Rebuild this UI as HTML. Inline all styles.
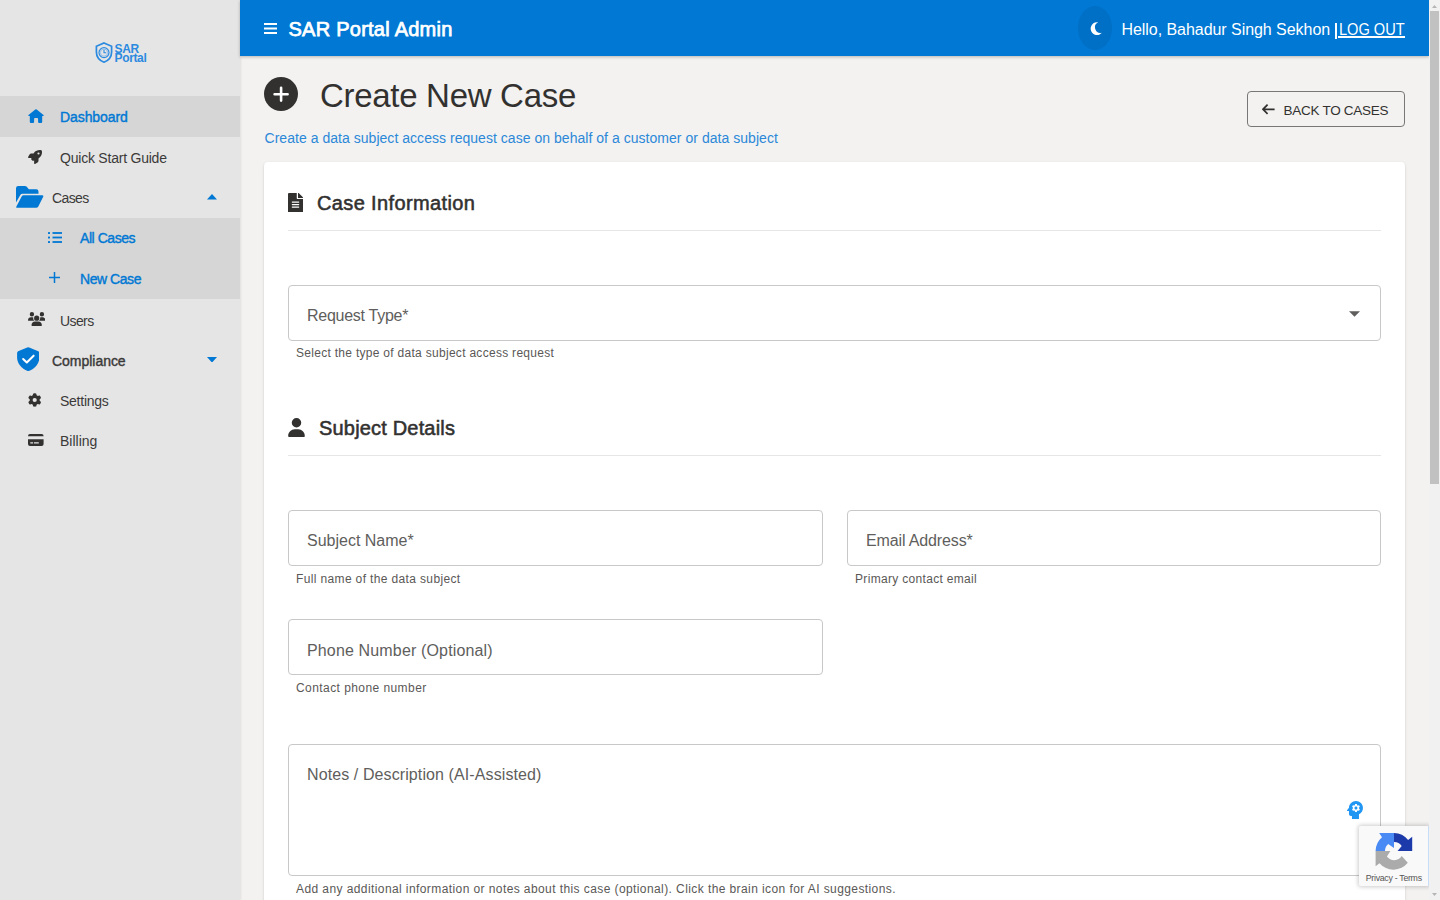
<!DOCTYPE html>
<html><head><meta charset="utf-8">
<style>
*{box-sizing:border-box}
html,body{margin:0;padding:0;width:1440px;height:900px;overflow:hidden;background:#f3f2f1;font-family:"Liberation Sans",sans-serif;color:#323130}
.abs{position:absolute}
#side{position:absolute;left:0;top:0;width:240px;height:900px;background:#e5e5e5;box-shadow:1px 0 2px rgba(0,0,0,0.08)}
.item{position:absolute;left:0;width:240px;height:40.5px}
.item .t{position:absolute;top:0;line-height:40.5px;font-size:14px;white-space:nowrap;color:#3b3a39}
.sel{background:#d6d6d6}
.sb{-webkit-text-stroke:0.4px currentColor}
.blue,.item .blue{color:#0078d4}
#hdr{position:absolute;left:240px;top:0;width:1189px;height:56px;background:#0078d4;box-shadow:0 1px 3px rgba(0,0,0,0.25)}
#card{position:absolute;left:264px;top:162px;width:1141px;height:760px;background:#fff;border-radius:4px;box-shadow:0 2px 1px -1px rgba(0,0,0,.2),0 1px 1px 0 rgba(0,0,0,.14),0 1px 3px 0 rgba(0,0,0,.12)}
.fld{position:absolute;border:1px solid #c8c8c8;border-radius:4px;background:#fff}
.lbl{position:absolute;left:18px;font-size:16px;color:#605e5c;white-space:nowrap}
.help{position:absolute;font-size:12px;letter-spacing:0.4px;color:#5a5856;white-space:nowrap}
.h2{position:absolute;font-size:19px;font-weight:700;color:#323130;white-space:nowrap}
.div{position:absolute;left:288px;width:1093px;height:1px;background:#e6e6e6}
#sb{position:absolute;left:1429px;top:0;width:11px;height:900px;background:#f1f1f1}
</style></head><body>

<div id="side">
  <!-- logo -->
  <svg class="abs" style="left:94.5px;top:41.5px" width="18" height="21" viewBox="0 0 18 21">
    <path d="M9 1 L16.6 4.2 V10 C16.6 15 13.2 18.6 9 20.2 C4.8 18.6 1.4 15 1.4 10 V4.2 Z" fill="none" stroke="#2b8ae0" stroke-width="1.7"/>
    <circle cx="9" cy="10.6" r="5" fill="none" stroke="#2b8ae0" stroke-width="1.2"/>
    <circle cx="9" cy="10.6" r="3.6" fill="none" stroke="#7db5ea" stroke-width="0.8"/>
    <path d="M9 7.8 V10.8 H11.2" fill="none" stroke="#2b8ae0" stroke-width="1.1"/>
  </svg>
  <div class="abs" style="left:114.5px;top:44.7px;font-size:12px;font-weight:700;color:#2b8ae0;line-height:9.6px;letter-spacing:-0.35px">SAR<br>Portal</div>

  <div class="item sel" style="top:96px">
    <svg class="abs" style="left:28px;top:12.8px" width="16" height="14.2" viewBox="0 0 16 14.2"><path d="M7.3 0.4 Q8 -0.1 8.7 0.4 L15.5 5.9 Q16.2 6.9 15.2 6.9 H14.2 V12.8 Q14.2 14.1 12.9 14.1 H11.4 Q10.1 14.1 10.1 12.8 V9.9 Q10.1 9.1 9.3 9.1 H6.9 Q6.1 9.1 6.1 9.9 V12.8 Q6.1 14.1 4.8 14.1 H3.1 Q1.8 14.1 1.8 12.8 V6.9 H0.8 Q-0.2 6.9 0.5 5.9 Z" fill="#0078d4"/></svg>
    <div class="t blue sb" style="left:60px;top:1px;letter-spacing:-0.08px">Dashboard</div>
  </div>
  <div class="item" style="top:136.5px">
    <svg class="abs" style="left:28px;top:13.3px" width="14" height="14" viewBox="0 0 512 512"><path d="M156.6 384.9L125.7 354c-8.5-8.5-11.5-20.8-7.7-32.2c3-8.9 7-20.5 11.8-33.8L24 288c-8.6 0-16.6-4.6-20.9-12.1s-4.2-16.7 .2-24.1l52.5-88.5c13-21.9 36.5-35.3 61.9-35.3l82.3 0c2.4-4 4.8-7.7 7.2-11.3C289.1-4.1 411.1-8.1 483.9 5.3c11.6 2.1 20.6 11.2 22.8 22.8c13.4 72.9 9.3 194.8-111.4 276.7c-3.5 2.4-7.3 4.8-11.3 7.2v82.3c0 25.4-13.4 49-35.3 61.9l-88.5 52.5c-7.4 4.4-16.6 4.5-24.1 .2s-12.1-12.2-12.1-20.9V380.8c-14.1 4.9-26.4 8.9-35.7 11.9c-11.2 3.6-23.4 .5-31.8-7.8zM384 168a40 40 0 1 0 0-80 40 40 0 1 0 0 80z" fill="#323130"/></svg>
    <div class="t" style="left:60px;top:1px;letter-spacing:-0.22px">Quick Start Guide</div>
  </div>
  <div class="item" style="top:177px">
    <svg class="abs" style="left:15.8px;top:9px" width="28" height="22" viewBox="0 0 28 22"><g fill="#0078d4"><path d="M0 2.3 Q0 0 2.3 0 H8.8 Q10 0 10.8 0.8 L12.8 3.2 H20.2 Q22.5 3.2 22.5 5.5 V7.7 H6.5 Q5 7.7 4.3 9 L0 16.5 Z"/><path d="M7.5 9.2 H26 Q27.9 9.2 27.2 10.8 L22.3 20.5 Q21.6 21.8 20.2 21.8 H1.3 Q-0.3 21.8 0.4 20.5 L5.8 10.3 Q6.3 9.2 7.5 9.2Z"/></g></svg>
    <div class="t" style="left:52px;top:1px;letter-spacing:-0.6px">Cases</div>
    <svg class="abs" style="left:207px;top:17px" width="10" height="5.6" viewBox="0 0 10 5.6"><path d="M0 5.6 L5 0 L10 5.6Z" fill="#0078d4"/></svg>
  </div>
  <div class="abs sel" style="left:0;top:217.5px;width:240px;height:81px"></div>
  <div class="item" style="top:217.5px">
    <svg class="abs" style="left:48.2px;top:14.5px" width="14" height="11" viewBox="0 0 14 11"><g fill="#0078d4"><rect x="0" y="0" width="2" height="2" rx="0.5"/><rect x="0" y="4.5" width="2" height="2" rx="0.5"/><rect x="0" y="9" width="2" height="2" rx="0.5"/><rect x="4.5" y="0.1" width="9.5" height="1.8"/><rect x="4.5" y="4.6" width="9.5" height="1.8"/><rect x="4.5" y="9.1" width="9.5" height="1.8"/></g></svg>
    <div class="t blue sb" style="left:80px;top:0px;letter-spacing:-0.45px">All Cases</div>
  </div>
  <div class="item" style="top:258px">
    <svg class="abs" style="left:48.6px;top:14px" width="11" height="11" viewBox="0 0 11 11"><path d="M4.75 0h1.5v4.75H11v1.5H6.25V11h-1.5V6.25H0v-1.5h4.75z" fill="#0078d4"/></svg>
    <div class="t blue sb" style="left:80px;top:1px;letter-spacing:-0.45px">New Case</div>
  </div>
  <div class="item" style="top:298.5px">
    <svg class="abs" style="left:28px;top:13.3px" width="17.4" height="14" viewBox="0 0 640 512"><path d="M144 0a80 80 0 1 1 0 160A80 80 0 1 1 144 0zM512 0a80 80 0 1 1 0 160A80 80 0 1 1 512 0zM0 298.7C0 239.8 47.8 192 106.7 192h42.7c15.9 0 31 3.5 44.6 9.7c-1.3 7.2-1.900 14.7-1.9 22.3c0 38.2 16.8 72.5 43.3 96c-.2 0-.4 0-.7 0H21.3C9.6 320 0 310.4 0 298.7zM405.3 320c-.2 0-.4 0-.7 0c26.6-23.5 43.3-57.8 43.3-96c0-7.6-.7-15-1.9-22.3c13.6-6.3 28.7-9.7 44.6-9.7h42.7C592.2 192 640 239.8 640 298.7c0 11.8-9.6 21.3-21.3 21.3H405.3zM224 224a96 96 0 1 1 192 0 96 96 0 1 1 -192 0zM128 485.3C128 411.7 187.7 352 261.3 352H378.7C452.3 352 512 411.7 512 485.3c0 14.7-11.9 26.7-26.7 26.7H154.7c-14.7 0-26.7-11.9-26.7-26.7z" fill="#323130"/></svg>
    <div class="t" style="left:60px;top:2px;letter-spacing:-0.6px">Users</div>
  </div>
  <div class="item" style="top:339px">
    <svg class="abs" style="left:16.8px;top:7.7px" width="22.4" height="24.2" viewBox="0 0 22 24"><path d="M11 0.2 Q11.5 0.2 12 0.4 L21 4.3 Q22 4.8 22 5.9 V10.5 C22 16.5 17.5 21.8 11 24 C4.5 21.8 0 16.5 0 10.5 V5.9 Q0 4.8 1 4.3 L10 0.4 Q10.5 0.2 11 0.2Z" fill="#0078d4"/><path d="M6 11.9 L9.6 15.4 L16.4 8.6" fill="none" stroke="#fff" stroke-width="2" stroke-linecap="round" stroke-linejoin="round"/></svg>
    <div class="t sb" style="left:52px;top:2px;letter-spacing:-0.03px">Compliance</div>
    <svg class="abs" style="left:207px;top:17.7px" width="10" height="5.6" viewBox="0 0 10 5.6"><path d="M0 0 L5 5.6 L10 0Z" fill="#0078d4"/></svg>
  </div>
  <div class="item" style="top:379.5px">
    <svg class="abs" style="left:28.2px;top:13.3px" width="13.4" height="14" viewBox="0 0 512 512"><path d="M495.9 166.6c3.2 8.7 .5 18.4-6.4 24.6l-43.3 39.4c1.1 8.3 1.7 16.8 1.7 25.4s-.6 17.1-1.7 25.4l43.3 39.4c6.9 6.2 9.6 15.9 6.4 24.6c-4.4 11.9-9.7 23.3-15.8 34.3l-4.7 8.1c-6.6 11-14 21.4-22.1 31.2c-5.9 7.2-15.7 9.6-24.5 6.8l-55.7-17.7c-13.4 10.3-28.2 18.9-44 25.4l-12.5 57.1c-2 9.1-9 16.3-18.2 17.800c-13.8 2.3-28 3.5-42.5 3.5s-28.7-1.2-42.5-3.5c-9.2-1.5-16.2-8.7-18.2-17.8l-12.5-57.1c-15.8-6.5-30.6-15.1-44-25.4L83.1 425.9c-8.8 2.8-18.6 .3-24.5-6.8c-8.1-9.8-15.5-20.2-22.1-31.2l-4.7-8.1c-6.1-11-11.4-22.4-15.8-34.3c-3.2-8.7-.5-18.4 6.4-24.6l43.3-39.4C64.6 273.1 64 264.6 64 256s.6-17.1 1.7-25.4L22.4 191.2c-6.9-6.2-9.6-15.9-6.4-24.6c4.4-11.9 9.7-23.3 15.8-34.3l4.7-8.1c6.6-11 14-21.4 22.1-31.2c5.9-7.2 15.7-9.6 24.5-6.8l55.7 17.7c13.4-10.3 28.2-18.9 44-25.4l12.5-57.1c2-9.1 9-16.3 18.2-17.8C227.3 1.2 241.5 0 256 0s28.7 1.2 42.5 3.5c9.2 1.5 16.2 8.7 18.2 17.8l12.5 57.1c15.8 6.5 30.6 15.1 44 25.4l55.7-17.7c8.8-2.8 18.6-.3 24.5 6.8c8.1 9.8 15.5 20.2 22.1 31.2l4.7 8.1c6.1 11 11.4 22.4 15.8 34.3zM256 336a80 80 0 1 0 0-160 80 80 0 1 0 0 160z" fill="#323130"/></svg>
    <div class="t" style="left:60px;top:1px;letter-spacing:-0.25px">Settings</div>
  </div>
  <div class="item" style="top:420px">
    <svg class="abs" style="left:28px;top:13.7px" width="15.6" height="12" viewBox="0 0 15.6 12"><path fill-rule="evenodd" d="M2 0h11.6Q15.6 0 15.6 2V2.2H0V2Q0 0 2 0z M0 5.2h15.6V10Q15.6 12 13.6 12H2Q0 12 0 10z M2.3 8.2v1.4h2.7V8.2z M5.9 8.2v1.4h4.9V8.2z" fill="#323130"/></svg>
    <div class="t" style="left:60px;top:1px">Billing</div>
  </div>
</div>
<div id="hdr">
  <svg class="abs" style="left:23.5px;top:23px" width="13" height="11" viewBox="0 0 13 11"><g fill="#fff"><rect y="0" width="13" height="2"/><rect y="4.5" width="13" height="2"/><rect y="9" width="13" height="2"/></g></svg>
  <div class="abs" style="left:48.5px;top:1px;line-height:56px;font-size:20px;font-weight:400;-webkit-text-stroke:0.75px #fff;letter-spacing:0.25px;color:#fff;white-space:nowrap">SAR Portal Admin</div>
  <div class="abs" style="left:838px;top:6px;width:34px;height:44px;border-radius:50%;background:#0070c6"></div>
  <svg class="abs" style="left:849.5px;top:22px" width="12" height="13" viewBox="0 0 12 13"><path d="M8.2 0.3 A6.4 6.4 0 1 0 11.9 10.8 A5.6 5.6 0 0 1 8.2 0.3Z" fill="#fff"/></svg>
  <div class="abs" style="left:881.5px;top:1px;line-height:57px;font-size:16px;letter-spacing:-0.05px;color:#fff;white-space:nowrap">Hello, Bahadur Singh Sekhon</div>
  <div class="abs" style="left:1095px;top:23px;width:1.6px;height:15.6px;background:#fff"></div>
  <div class="abs" style="left:1099px;top:1px;line-height:57px;font-size:16px;color:#fff;white-space:nowrap;transform:scaleX(0.912);transform-origin:0 0">LOG OUT</div>
  <div class="abs" style="left:1098px;top:36.2px;width:67px;height:1.4px;background:#fff"></div>
</div>

<!-- page title -->
<svg class="abs" style="left:264px;top:77px" width="34" height="34" viewBox="0 0 34 34"><circle cx="17" cy="17" r="17" fill="#323130"/><path d="M10.6 17.2 H23.6 M17.1 10.8 V23.6" stroke="#fff" stroke-width="2.6" stroke-linecap="round" fill="none"/></svg>
<div class="abs" style="left:320px;top:75.5px;font-size:33px;letter-spacing:-0.3px;line-height:40px;color:#323130;white-space:nowrap">Create New Case</div>
<div class="abs" style="left:264.5px;top:128.5px;font-size:14px;letter-spacing:0.035px;line-height:18px;color:#2b88d8;white-space:nowrap">Create a data subject access request case on behalf of a customer or data subject</div>

<div class="abs" style="left:1246.5px;top:91px;width:158.5px;height:35.5px;border:1px solid #777;border-radius:4px"></div>
<svg class="abs" style="left:1262px;top:103.5px" width="13" height="11" viewBox="0 0 13 11"><path d="M5.6 0.7 L1 5.3 L5.6 9.9 M1.2 5.3 H12.6" fill="none" stroke="#323130" stroke-width="1.7"/></svg>
<div class="abs" style="left:1283.5px;top:102px;font-size:13.5px;letter-spacing:-0.27px;line-height:18px;color:#323130;white-space:nowrap">BACK TO CASES</div>

<div id="card"></div>

<!-- Case Information -->
<svg class="abs" style="left:288px;top:192.5px" width="15" height="19.6" viewBox="0 0 384 512" preserveAspectRatio="none"><path d="M224 136V0H24C10.7 0 0 10.7 0 24v464c0 13.3 10.7 24 24 24h336c13.3 0 24-10.7 24-24V160H248c-13.2 0-24-10.8-24-24zm64 236c0 6.6-5.4 12-12 12H108c-6.6 0-12-5.4-12-12v-8c0-6.6 5.4-12 12-12h168c6.6 0 12 5.4 12 12v8zm0-64c0 6.6-5.4 12-12 12H108c-6.6 0-12-5.4-12-12v-8c0-6.6 5.4-12 12-12h168c6.6 0 12 5.4 12 12v8zm0-72v8c0 6.6-5.4 12-12 12H108c-6.6 0-12-5.4-12-12v-8c0-6.6 5.4-12 12-12h168c6.6 0 12 5.4 12 12zm96-114.1v6.1H256V0h6.1c6.4 0 12.5 2.5 17 7l97.9 98c4.5 4.5 7 10.6 7 16.9z" fill="#323130"/></svg>
<div class="h2" style="left:317px;top:191px;line-height:24px;font-size:20px;font-weight:400;-webkit-text-stroke:0.55px #323130;letter-spacing:0.37px">Case Information</div>
<div class="div" style="top:230px"></div>

<div class="fld" style="left:288px;top:285px;width:1093px;height:56px"></div>
<div class="lbl" style="left:307px;top:306px;line-height:20px;letter-spacing:-0.27px">Request Type*</div>
<svg class="abs" style="left:1349px;top:311px" width="11" height="6" viewBox="0 0 10 5"><path d="M0 0 L5 5 L10 0Z" fill="#605e5c"/></svg>
<div class="help" style="left:296px;top:345px;line-height:16px;letter-spacing:0.29px">Select the type of data subject access request</div>

<!-- Subject Details -->
<svg class="abs" style="left:288px;top:418px" width="17" height="19" viewBox="0 0 448 512"><path d="M224 256A128 128 0 1 0 224 0a128 128 0 1 0 0 256zm-45.7 48C79.8 304 0 383.8 0 482.3C0 498.7 13.3 512 29.7 512H418.3c16.4 0 29.7-13.3 29.7-29.7C448 383.8 368.2 304 269.7 304H178.3z" fill="#323130"/></svg>
<div class="h2" style="left:319px;top:416px;line-height:24px;font-size:20px;font-weight:400;-webkit-text-stroke:0.55px #323130;letter-spacing:0.18px">Subject Details</div>
<div class="div" style="top:455px"></div>

<div class="fld" style="left:288px;top:510px;width:535px;height:56px"></div>
<div class="lbl" style="left:307px;top:530.5px;line-height:20px">Subject Name*</div>
<div class="help" style="left:296px;top:571px;line-height:16px;letter-spacing:0.36px">Full name of the data subject</div>
<div class="fld" style="left:847px;top:510px;width:534px;height:56px"></div>
<div class="lbl" style="left:866px;top:530.5px;line-height:20px;letter-spacing:-0.13px">Email Address*</div>
<div class="help" style="left:855px;top:571px;line-height:16px;letter-spacing:0.32px">Primary contact email</div>

<div class="fld" style="left:288px;top:619px;width:535px;height:56px"></div>
<div class="lbl" style="left:307px;top:640.5px;line-height:20px;letter-spacing:0.15px">Phone Number (Optional)</div>
<div class="help" style="left:296px;top:680px;line-height:16px;letter-spacing:0.43px">Contact phone number</div>

<div class="fld" style="left:288px;top:744px;width:1093px;height:132px"></div>
<div class="lbl" style="left:307px;top:764.5px;line-height:20px;letter-spacing:0.1px">Notes / Description (AI-Assisted)</div>
<svg class="abs" style="left:1347px;top:801px" width="16" height="18" viewBox="4.08 3 15.92 18"><path d="M13 3C9.23 3 6.19 5.95 6 9.66l-1.92 2.53c-.24.31 0 .81.42.81H6v3c0 1.11.89 2 2 2h1v3h7v-4.69c2.37-1.12 4-3.51 4-6.31 0-3.86-3.12-7-7-7zm3 7c0 .13-.01.26-.02.39l.83.66c.08.06.1.16.05.25l-.8 1.39c-.05.09-.16.12-.24.09l-.99-.4c-.21.16-.43.29-.67.39L14 13.83c-.01.1-.1.17-.2.17h-1.6c-.1 0-.18-.07-.2-.17l-.15-1.06c-.25-.1-.47-.23-.68-.39l-.99.4c-.09.03-.2 0-.25-.09l-.8-1.39c-.05-.08-.03-.19.05-.25l.84-.66c-.01-.13-.02-.26-.02-.39s.02-.27.04-.39l-.85-.66c-.08-.06-.1-.16-.05-.26l.8-1.38c.05-.09.15-.12.24-.09l1 .4c.2-.15.43-.29.67-.39L12 6.17c.02-.1.1-.17.2-.17h1.6c.1 0 .18.07.2.17l.15 1.06c.24.1.46.23.67.39l1-.4c.09-.03.2 0 .24.09l.8 1.38c.05.09.03.2-.05.26l-.85.66c.03.12.04.25.04.39zm-3-1.5c-.83 0-1.5.67-1.5 1.5s.67 1.5 1.5 1.5 1.5-.67 1.5-1.5-.67-1.5-1.5-1.5z" fill="#2196f3"/></svg>
<div class="help" style="left:296px;top:881px;line-height:16px;letter-spacing:0.41px">Add any additional information or notes about this case (optional). Click the brain icon for AI suggestions.</div>

<!-- recaptcha -->
<div class="abs" style="left:1359px;top:826px;width:70px;height:60px;background:#f9f9f9;box-shadow:0 0 4px 1px rgba(0,0,0,0.2);border-radius:2px 0 0 2px;border-right:1px solid #c8ddf8"></div>
<svg class="abs" style="left:1370px;top:828px" width="50" height="46" viewBox="0 0 50 46">
  <path d="M5.6 23 L15 23 A9 9 0 0 1 18.2 16.1 L24 20 L24 4.9 L9.2 4.9 L12 9.2 A18.4 18.4 0 0 0 5.6 23 Z" fill="#4a8af4"/>
  <path d="M24 4.9 A18.1 18.1 0 0 1 38.1 12 L42.2 8.7 L42.2 23 L27.6 23 L31.7 18.1 A9 9 0 0 0 24 14 Z" fill="#1c3aa9"/>
  <path d="M5.6 23 L20.4 23 L16.9 28.6 A9 9 0 0 0 31.7 27.9 L37.8 34.8 A18.4 18.4 0 0 1 9.5 35.3 L5.6 38.3 Z" fill="#ababab"/>
</svg>
<div class="abs" style="left:1365.8px;top:872.5px;font-size:8.8px;line-height:11px;letter-spacing:-0.3px;color:#555;white-space:nowrap">Privacy - Terms</div>

<div id="sb">
  <div class="abs" style="left:1px;top:11px;width:9px;height:473px;background:#c1c1c1"></div>
  <svg class="abs" style="left:3px;top:4.5px" width="5" height="3" viewBox="0 0 5 3"><path d="M0 3 L2.5 0 L5 3Z" fill="#b5b5b5"/></svg>
  <svg class="abs" style="left:3px;top:892.5px" width="5" height="3" viewBox="0 0 5 3"><path d="M0 0 L2.5 3 L5 0Z" fill="#b5b5b5"/></svg>
</div>
</body></html>
